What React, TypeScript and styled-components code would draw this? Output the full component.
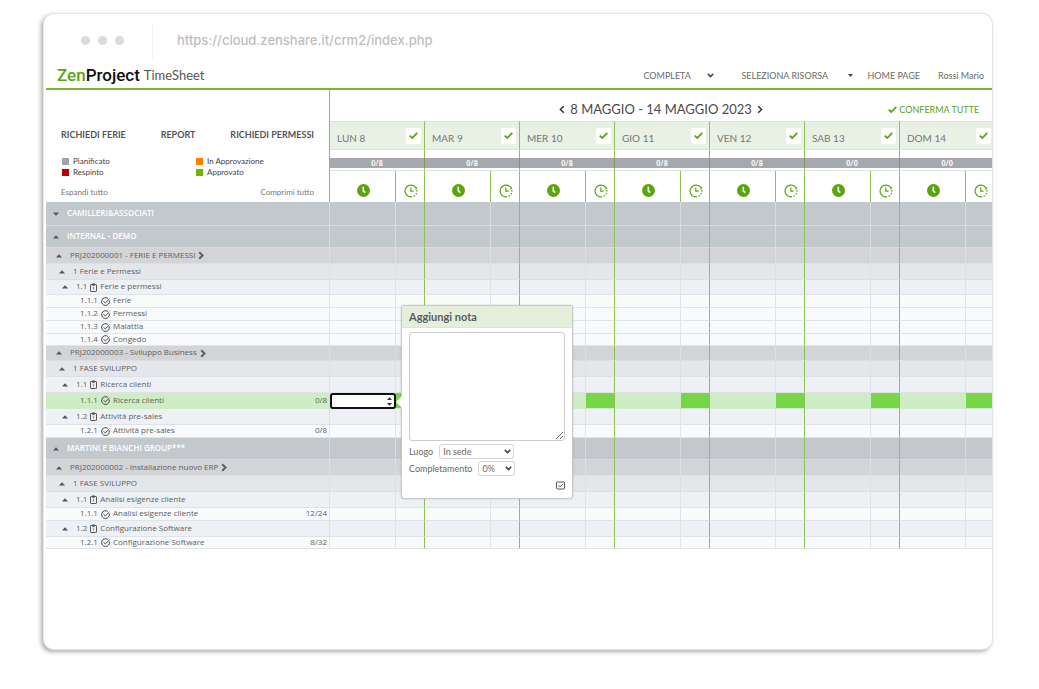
import React from "react";
import styled, { createGlobalStyle, css } from "styled-components";

const GlobalStyle = createGlobalStyle`
  *, *::before, *::after { box-sizing: border-box; }
  body {
    margin: 0;
    background: #fff;
    color: #6b6b6b;
    font-family: Lato, "Open Sans", sans-serif;
    font-size: 9px;
  }
  button, input, select, textarea { font: inherit; color: inherit; }
  button { border: 0; padding: 0; background: none; cursor: pointer; }
  a { color: inherit; text-decoration: none; }
`;

const green = "#5ba30f";
const lineGreen = "#8dc155";

const Page = styled.div`
  padding: 14px 47px 40px 44px;
`;

const BrowserWindow = styled.div`
  min-height: calc(100vh - 54px);
  min-width: 800px;
  padding-left: 2px;
  background: #fff;
  border-radius: 10px;
  box-shadow: 0 0 0 1px #e6e6e9, -2px 2px 4px 1px rgba(0, 0, 0, 0.32);
  overflow: hidden;
`;

const AddressBar = styled.div`
  display: flex;
  align-items: center;
  height: 47px;
  padding: 6px 0 0 34px;
`;

const Dots = styled.div`
  display: flex;
  gap: 8px;
  width: 72px;
  padding-left: 1px;
`;

const Dot = styled.span`
  width: 9px;
  height: 9px;
  border-radius: 50%;
  background: #dbdbdb;
`;

const Address = styled.div`
  display: flex;
  align-items: center;
  height: 38px;
  padding: 0 0 2px 24px;
  border-left: 1px solid #f4f4f5;
  color: #bcbec1;
  font-family: Inter, sans-serif;
  font-size: 13px;
  font-weight: 500;
`;

const TopBar = styled.header`
  display: flex;
  align-items: center;
  height: 29px;
  padding: 1px 8px 0 11px;
  border-bottom: 2px solid #78b833;
`;

const Brand = styled.div`
  color: #111;
  font-family: Roboto, sans-serif;
  font-size: 17px;
  font-weight: 500;
  line-height: 20px;
`;

const BrandAccent = styled.span`
  color: ${green};
`;

const AppName = styled.h1`
  margin: 0 auto 0 4px;
  color: #555;
  font-size: 13px;
  font-weight: 400;
`;

const Nav = styled.nav`
  display: flex;
  align-items: center;
  gap: 14px;
  white-space: nowrap;
`;

const NavLink = styled.a`
  & + & { margin-left: 4px; }
`;

const SelectBox = styled.span<{ $width: number; $framed?: boolean }>`
  display: inline-flex;
  position: relative;
  align-items: center;
  width: ${(p) => p.$width}px;
  height: 15px;
  ${(p) =>
    p.$framed &&
    css`
      border: 1px solid #d3d3d3;
      border-radius: 3px;
    `}
`;

const Select = styled.select<{ $inset?: number }>`
  width: 100%;
  padding: 0 0 0 ${(p) => p.$inset ?? 0}px;
  border: 0;
  background: transparent;
  appearance: none;
  outline: none;
`;

const SelectMark = styled.svg<{ $right: number }>`
  position: absolute;
  right: ${(p) => p.$right}px;
  pointer-events: none;
`;

const Sheet = styled.table`
  width: calc(100% + 3px);
  table-layout: fixed;
  border-collapse: separate;
  border-spacing: 0;
  white-space: nowrap;

  th, td { padding: 0; font-weight: 400; text-align: left; }
`;

const PanelCell = styled.th`
  border-right: 1px solid ${lineGreen};
  vertical-align: bottom;
`;

const Panel = styled.div`
  display: flex;
  flex-direction: column;
  padding: 0 15px 4px;
`;

const SpreadRow = styled.div`
  display: flex;
  justify-content: space-between;
  line-height: 12px;
`;

const ActionButton = styled.button`
  color: #555;
  font-weight: 700;
`;

const TextButton = styled.button`
  color: #777;
  font-size: 8px;
`;

const Legend = styled.ul`
  display: grid;
  grid-template-columns: 1fr 118px;
  margin: 15px 0 8px;
  padding: 0 0 0 1px;
  list-style: none;
  color: #444;
  font-size: 8px;
  line-height: 11px;
`;

const LegendItem = styled.li<{ $color: string }>`
  display: flex;
  align-items: center;
  gap: 4px;

  &::before {
    content: "";
    width: 7px;
    height: 7px;
    background: ${(p) => p.$color};
  }
`;

const HeadRow = styled.tr<{ $height: number }>`
  height: ${(p) => p.$height}px;
`;

const PeriodBar = styled.div`
  display: grid;
  grid-template-columns: 1fr auto 1fr;
  align-items: center;
  padding: 7px 16px 0 13px;
`;

const Period = styled.div`
  display: flex;
  grid-column: 2;
  align-items: center;
  gap: 5px;
  color: #4a4a4a;
  font-size: 13px;
  line-height: 16px;
`;

const StepButton = styled.button`
  display: flex;
  color: #333;
`;

const ConfirmAll = styled.button`
  display: flex;
  justify-self: end;
  align-items: center;
  gap: 2px;
  color: ${green};
`;

const DayCell = styled.th`
  background: #e9f0e4;
  border-top: 1px solid #dbe1e8;
  border-right: 1px solid ${lineGreen};
  border-bottom: 1px solid #dfe3e8;
`;

const DayHead = styled.div`
  display: flex;
  align-items: center;
  justify-content: space-between;
  padding: 0 3px 0 7px;
  color: #777;
  font-size: 10px;
`;

const DayName = styled.span`
  padding-top: 4px;
`;

const ConfirmDay = styled.button`
  display: grid;
  place-items: center;
  width: 15px;
  height: 16px;
  background: #fff;
  border-radius: 2px;
  color: ${green};
`;

const TotalCell = styled.td`
  border-right: 1px solid ${lineGreen};
  border-bottom: 1px solid #dfe3e8;
`;

const TotalBar = styled.div`
  margin: 5px -1px 0 0;
  border-right: 1px solid #7d9a5c;
  background: #a5a9ae;
  color: #fff;
  font-size: 7px;
  font-weight: 900;
  line-height: 10px;
  text-align: center;
`;

const KindCell = styled.th`
  border-right: 1px solid ${lineGreen};
`;

const KindIcon = styled.div`
  display: flex;
  justify-content: center;
  padding: 8px 0 0 1px;
  color: ${green};
`;

type Kind = "group" | "project" | "phase" | "task" | "activity" | "active";

const rowLook: Record<Kind, { fill: string; line: string; indent: number }> = {
  group: { fill: "#c3c8cd", line: "#d8dce0", indent: 7 },
  project: { fill: "#d3d4d7", line: "#dddfe2", indent: 10 },
  phase: { fill: "#e5e6e9", line: "#dcdfe3", indent: 13 },
  task: { fill: "#edf1f5", line: "#dfe3e7", indent: 16 },
  activity: { fill: "#f8fafc", line: "#e0e4e8", indent: 34 },
  active: { fill: "#cfedc5", line: "#cfedc5", indent: 34 },
};

const SheetRow = styled.tr<{ $kind: Kind; $height: number }>`
  height: ${(p) => p.$height}px;
  background: ${(p) => rowLook[p.$kind].fill};
  color: ${(p) => (p.$kind === "group" ? "#fff" : "#606060")};

  th, td { border-bottom: 1px solid ${(p) => rowLook[p.$kind].line}; }
`;

const NameCell = styled.th<{ $kind: Kind }>`
  border-right: 1px solid ${(p) => rowLook[p.$kind].line};
`;

const NameLine = styled.div<{ $kind: Kind }>`
  display: flex;
  align-items: center;
  gap: 3px;
  height: 11px;
  padding: 0 2px 0 ${(p) => rowLook[p.$kind].indent}px;
  font-family: "Open Sans", sans-serif;
  font-size: 8px;
  font-weight: ${(p) => (p.$kind === "group" ? 600 : 400)};
  line-height: 11px;
`;

const RowText = styled.span`
  padding-bottom: 3px;
`;

const Toggle = styled.button`
  display: flex;
  width: 6px;
  margin-right: 5px;
  color: #555;
`;

const Hours = styled(RowText)`
  margin-left: auto;
`;

const WorkCell = styled.td<{ $kind: Kind }>`
  border-right: 1px solid ${(p) => rowLook[p.$kind].line};
`;

const ExtraCell = styled.td<{ $active: boolean }>`
  position: relative;
  border-right: 1px solid ${lineGreen};
  ${(p) =>
    p.$active &&
    css`
      background: #76d648;
    `}
`;

const HoursField = styled.div`
  display: flex;
  position: relative;
  align-items: center;
  margin: 0 -1px -1px 0;
`;

const HoursInput = styled.input`
  width: 100%;
  height: 16px;
  padding: 0 14px 0 4px;
  background: #fff;
  border: 2px solid #111;
  border-radius: 3px;
  outline: none;
  appearance: textfield;

  &::-webkit-inner-spin-button { appearance: none; }
`;

const Popover = styled.form`
  position: absolute;
  z-index: 2;
  top: -88px;
  left: 5px;
  width: 172px;
  height: 194px;
  background: #fff;
  border: 1px solid #c9c9c9;
  border-radius: 3px;
  box-shadow: 0 0 2px rgba(0, 0, 0, 0.2);
  color: #686868;

  &::before {
    content: "";
    position: absolute;
    top: 90px;
    left: -6px;
    border: 6px solid transparent;
    border-right-color: #fff;
    border-left-width: 0;
  }
`;

const PopoverTitle = styled.h2`
  margin: 0;
  padding: 0 7px;
  background: #e5eedb;
  border-bottom: 1px solid #dde6d3;
  color: #5c5c5c;
  font-size: 11px;
  font-weight: 700;
  line-height: 21px;
`;

const PopoverBody = styled.div`
  display: flex;
  flex-direction: column;
  gap: 2px;
  padding: 4px 7px;
`;

const Note = styled.textarea`
  width: 100%;
  height: 109px;
  margin-bottom: 1px;
  border: 1px solid #ccc;
  border-radius: 3px;
  outline: none;
`;

const FieldRow = styled.label`
  display: flex;
  align-items: center;
  gap: 6px;
`;

const SaveButton = styled.button`
  display: flex;
  align-self: flex-end;
  padding-top: 3px;
`;

const Check = ({ size = 9 }: { size?: number }) => (
  <svg width={size} height={size} viewBox="0 0 10 10" fill="none" stroke="currentColor" strokeWidth="2">
    <path d="M0.8 5.2 3.6 7.8 9.2 2.2" />
  </svg>
);

const Chevron = ({ d, weight = 1.5 }: { d: string; weight?: number }) => (
  <svg width="6" height="9" viewBox="0 0 6 9" fill="none" stroke="currentColor" strokeWidth={weight}>
    <path d={d} />
  </svg>
);

const LEFT = "M4.8 1.2 1.4 4.5 4.8 7.8";
const RIGHT = "M1.2 1.2 4.6 4.5 1.2 7.8";

const Caret = ({ down }: { down?: boolean }) => (
  <svg width="6" height="4" viewBox="0 0 6 4" fill="currentColor">
    <path d={down ? "M0 0.5h6L3 3.8z" : "M0 3.5h6L3 0.2z"} />
  </svg>
);

const ClockSolid = () => (
  <svg width="13" height="13" viewBox="0 0 13 13">
    <circle cx="6.5" cy="6.5" r="6.5" fill="currentColor" />
    <path d="M6.3 2.8v4l2 1.8" fill="none" stroke="#fff" strokeWidth="1.6" />
  </svg>
);

const ClockDashed = () => (
  <svg width="14" height="14" viewBox="0 0 14 14" fill="none" stroke="currentColor" strokeWidth="1.2">
    <path d="M7 12.9A5.9 5.9 0 1 1 11.9 3.7" />
    <path d="M12.8 6A5.9 5.9 0 0 1 7 12.9" strokeDasharray="1.6 1.4" />
    <path d="M13 2.8v2.4h-2.4z" fill="currentColor" stroke="none" />
    <path d="M6.8 3.5v3.7h2.8" />
  </svg>
);

const Clipboard = () => (
  <svg width="7" height="9" viewBox="0 0 7 9" fill="none" stroke="#555">
    <rect x="0.5" y="1.5" width="6" height="7" rx="0.6" />
    <path d="M2 1h3M2.4 2.6h2.2" />
    <path d="M3.5 4v2.8" strokeOpacity="0.6" />
  </svg>
);

const CircleCheck = () => (
  <svg width="9" height="9" viewBox="0 0 9 9" fill="none" stroke="#444">
    <path d="M8.3 3.6A3.9 3.9 0 1 1 6.8 1.4" />
    <path d="M2.5 4.2 4.3 5.9 8.5 1.9" />
  </svg>
);

const BoxCheck = () => (
  <svg width="9" height="9" viewBox="0 0 9 9" fill="none" stroke="#555">
    <rect x="0.5" y="1" width="8" height="7" rx="0.8" />
    <path d="M2.2 4.4 3.9 6 6.9 2.9" />
  </svg>
);

const SelectArrow = ({ right }: { right: number }) => (
  <SelectMark $right={right} width="7" height="5" viewBox="0 0 7 5" fill="none" stroke="#444" strokeWidth="1.5">
    <path d="M0.8 0.9 3.5 3.6 6.2 0.9" />
  </SelectMark>
);

const days = [
  { name: "LUN 8", total: "0/8" },
  { name: "MAR 9", total: "0/8" },
  { name: "MER 10", total: "0/8" },
  { name: "GIO 11", total: "0/8" },
  { name: "VEN 12", total: "0/8" },
  { name: "SAB 13", total: "0/0" },
  { name: "DOM 14", total: "0/0" },
];

type Row = { kind: Kind; label: string; code?: string; hours?: string; height: number; closed?: boolean };

const rows: Row[] = [
  { kind: "group", label: "CAMILLERI&ASSOCIATI", height: 24, closed: true },
  { kind: "group", label: "INTERNAL - DEMO", height: 22 },
  { kind: "project", label: "PRJ202000001 - FERIE E PERMESSI", height: 16 },
  { kind: "phase", label: "1 Ferie e Permessi", height: 16 },
  { kind: "task", code: "1.1", label: "Ferie e permessi", height: 15 },
  { kind: "activity", code: "1.1.1", label: "Ferie", height: 13 },
  { kind: "activity", code: "1.1.2", label: "Permessi", height: 13 },
  { kind: "activity", code: "1.1.3", label: "Malattia", height: 13 },
  { kind: "activity", code: "1.1.4", label: "Congedo", height: 12 },
  { kind: "project", label: "PRJ202000003 - Sviluppo Business", height: 15 },
  { kind: "phase", label: "1 FASE SVILUPPO", height: 16 },
  { kind: "task", code: "1.1", label: "Ricerca clienti", height: 16 },
  { kind: "active", code: "1.1.1", label: "Ricerca clienti", hours: "0/8", height: 16 },
  { kind: "task", code: "1.2", label: "Attività pre-sales", height: 16 },
  { kind: "activity", code: "1.2.1", label: "Attività pre-sales", hours: "0/8", height: 13 },
  { kind: "group", label: "MARTINI E BIANCHI GROUP***", height: 22 },
  { kind: "project", label: "PRJ202000002 - Installazione nuovo ERP", height: 16 },
  { kind: "phase", label: "1 FASE SVILUPPO", height: 16 },
  { kind: "task", code: "1.1", label: "Analisi esigenze cliente", height: 16 },
  { kind: "activity", code: "1.1.1", label: "Analisi esigenze cliente", hours: "12/24", height: 13 },
  { kind: "task", code: "1.2", label: "Configurazione Software", height: 16 },
  { kind: "activity", code: "1.2.1", label: "Configurazione Software", hours: "8/32", height: 12 },
];

const NotePopover = () => (
  <Popover>
    <PopoverTitle>Aggiungi nota</PopoverTitle>
    <PopoverBody>
      <Note aria-label="Aggiungi nota" />
      <FieldRow>
        Luogo
        <SelectBox $width={75} $framed>
          <Select $inset={3}>
            <option>In sede</option>
          </Select>
          <SelectArrow right={2} />
        </SelectBox>
      </FieldRow>
      <FieldRow>
        Completamento
        <SelectBox $width={37} $framed>
          <Select $inset={3}>
            <option>0%</option>
          </Select>
          <SelectArrow right={2} />
        </SelectBox>
      </FieldRow>
      <SaveButton type="button" aria-label="Salva">
        <BoxCheck />
      </SaveButton>
    </PopoverBody>
  </Popover>
);

const TimeRow = ({ row }: { row: Row }) => {
  const { kind, label, code, hours, height, closed } = row;
  const active = kind === "active";
  const leaf = active || kind === "activity";
  return (
    <SheetRow $kind={kind} $height={height}>
      <NameCell $kind={kind} scope="row">
        <NameLine $kind={kind}>
          {!leaf && (
            <Toggle aria-label={label}>
              <Caret down={closed} />
            </Toggle>
          )}
          {code && <RowText>{code}</RowText>}
          {kind === "task" && <Clipboard />}
          {leaf && <CircleCheck />}
          <RowText>{label}</RowText>
          {kind === "project" && <Chevron d={RIGHT} weight={2} />}
          {hours && <Hours>{hours}</Hours>}
        </NameLine>
      </NameCell>
      {days.map((day, i) => (
        <React.Fragment key={day.name}>
          <WorkCell $kind={kind}>
            {active && i === 0 && (
              <HoursField>
                <HoursInput type="number" aria-label="Ore" />
                <SelectMark $right={4} width="5" height="9" viewBox="0 0 5 9" fill="#333">
                  <path d="M0 3h5L2.5 0.2zM0 6h5L2.5 8.8z" />
                </SelectMark>
              </HoursField>
            )}
          </WorkCell>
          <ExtraCell $active={active}>{active && i === 0 && <NotePopover />}</ExtraCell>
        </React.Fragment>
      ))}
    </SheetRow>
  );
};

export default function App() {
  return (
    <Page>
      <GlobalStyle />
      <BrowserWindow>
        <AddressBar>
          <Dots>
            <Dot />
            <Dot />
            <Dot />
          </Dots>
          <Address>https://cloud.zenshare.it/crm2/index.php</Address>
        </AddressBar>
        <TopBar>
          <Brand>
            <BrandAccent>Zen</BrandAccent>Project
          </Brand>
          <AppName>TimeSheet</AppName>
          <Nav>
            <SelectBox $width={84}>
              <Select aria-label="Vista">
                <option>COMPLETA</option>
              </Select>
              <SelectArrow right={13} />
            </SelectBox>
            <SelectBox $width={112}>
              <Select aria-label="Risorsa">
                <option>SELEZIONA RISORSA</option>
              </Select>
              <SelectMark $right={0} width="5" height="3" viewBox="0 0 5 3" fill="#444">
                <path d="M0 0h5L2.5 3z" />
              </SelectMark>
            </SelectBox>
            <NavLink href="#home">HOME PAGE</NavLink>
            <NavLink href="#profile">Rossi Mario</NavLink>
          </Nav>
        </TopBar>
        <Sheet>
          <colgroup>
            <col width="284" />
            {days.map((day) => (
              <React.Fragment key={day.name}>
                <col width="66" />
                <col width="29" />
              </React.Fragment>
            ))}
          </colgroup>
          <thead>
            <HeadRow $height={31}>
              <PanelCell rowSpan={4}>
                <Panel>
                  <SpreadRow>
                    <ActionButton>RICHIEDI FERIE</ActionButton>
                    <ActionButton>REPORT</ActionButton>
                    <ActionButton>RICHIEDI PERMESSI</ActionButton>
                  </SpreadRow>
                  <Legend>
                    <LegendItem $color="#a0a5aa">Pianificato</LegendItem>
                    <LegendItem $color="#ff8000">In Approvazione</LegendItem>
                    <LegendItem $color="#b80000">Respinto</LegendItem>
                    <LegendItem $color="#76b200">Approvato</LegendItem>
                  </Legend>
                  <SpreadRow>
                    <TextButton>Espandi tutto</TextButton>
                    <TextButton>Comprimi tutto</TextButton>
                  </SpreadRow>
                </Panel>
              </PanelCell>
              <th colSpan={14}>
                <PeriodBar>
                  <Period>
                    <StepButton aria-label="Settimana precedente">
                      <Chevron d={LEFT} />
                    </StepButton>
                    8 MAGGIO - 14 MAGGIO 2023
                    <StepButton aria-label="Settimana successiva">
                      <Chevron d={RIGHT} />
                    </StepButton>
                  </Period>
                  <ConfirmAll>
                    <Check />
                    CONFERMA TUTTE
                  </ConfirmAll>
                </PeriodBar>
              </th>
            </HeadRow>
            <HeadRow $height={29}>
              {days.map((day) => (
                <DayCell key={day.name} colSpan={2} scope="colgroup">
                  <DayHead>
                    <DayName>{day.name}</DayName>
                    <ConfirmDay aria-label={`Conferma ${day.name}`}>
                      <Check />
                    </ConfirmDay>
                  </DayHead>
                </DayCell>
              ))}
            </HeadRow>
            <HeadRow $height={21}>
              {days.map((day) => (
                <TotalCell key={day.name} colSpan={2}>
                  <TotalBar>{day.total}</TotalBar>
                </TotalCell>
              ))}
            </HeadRow>
            <HeadRow $height={31}>
              {days.map((day) => (
                <React.Fragment key={day.name}>
                  <KindCell aria-label="Ore ordinarie">
                    <KindIcon>
                      <ClockSolid />
                    </KindIcon>
                  </KindCell>
                  <KindCell aria-label="Straordinari">
                    <KindIcon>
                      <ClockDashed />
                    </KindIcon>
                  </KindCell>
                </React.Fragment>
              ))}
            </HeadRow>
          </thead>
          <tbody>
            {rows.map((row, i) => (
              <TimeRow key={i} row={row} />
            ))}
          </tbody>
        </Sheet>
      </BrowserWindow>
    </Page>
  );
}
